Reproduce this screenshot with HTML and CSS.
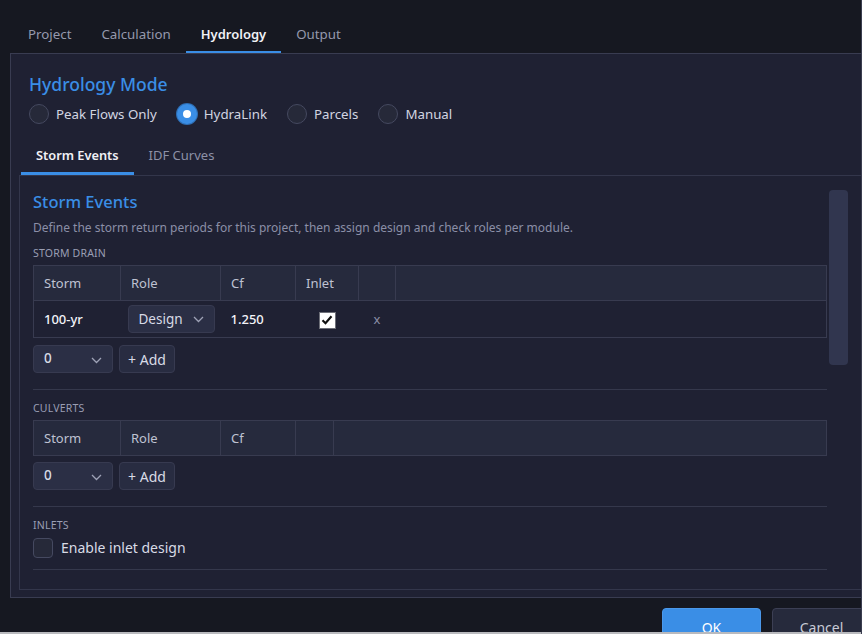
FILE: index.html
```html
<!DOCTYPE html>
<html lang="en">

<head>
    <meta charset="UTF-8">
    <meta name="viewport" content="width=device-width, initial-scale=1.0">
    <title>Project Settings</title>
    <link rel="stylesheet" href="styles.css">
</head>

<body>
    <div class="window">
        <div class="tabs">
            <span class="tab">Project</span>
            <span class="tab">Calculation</span>
            <span class="tab active">Hydrology</span>
            <span class="tab">Output</span>
        </div>

        <div class="panel">
            <h1 class="mode-title">Hydrology Mode</h1>
            <div class="radios">
                <label class="radio"><span class="dot"></span>Peak Flows Only</label>
                <label class="radio checked"><span class="dot"></span>HydraLink</label>
                <label class="radio"><span class="dot"></span>Parcels</label>
                <label class="radio"><span class="dot"></span>Manual</label>
            </div>

            <div class="subtabs">
                <span class="subtab active">Storm Events</span>
                <span class="subtab">IDF Curves</span>
            </div>

            <div class="inner">
                <div class="content">
                    <h2 class="section-title">Storm Events</h2>
                    <p class="desc">Define the storm return periods for this project, then assign design and check roles per module.</p>

                    <div class="group-label">Storm Drain</div>
                    <table class="grid">
                        <tr>
                            <th class="c-storm">Storm</th>
                            <th class="c-role">Role</th>
                            <th class="c-cf">Cf</th>
                            <th class="c-inlet">Inlet</th>
                            <th class="c-del"></th>
                            <th></th>
                        </tr>
                        <tr>
                            <td class="strong">100-yr</td>
                            <td>
                                <span class="select role-select">Design
                                    <svg class="chev" width="11" height="7" viewBox="0 0 11 7"><path d="M1 1l4.5 4.5L10 1" fill="none" stroke="currentColor" stroke-width="1.3"/></svg>
                                </span>
                            </td>
                            <td class="strong">1.250</td>
                            <td class="center">
                                <span class="check on">
                                    <svg width="14" height="14" viewBox="0 0 14 14"><path d="M2.5 7.2l3 3 6-7" fill="none" stroke="#111" stroke-width="2.2"/></svg>
                                </span>
                            </td>
                            <td class="center del">x</td>
                            <td></td>
                        </tr>
                    </table>
                    <div class="adder">
                        <span class="select num-select">0
                            <svg class="chev" width="11" height="7" viewBox="0 0 11 7"><path d="M1 1l4.5 4.5L10 1" fill="none" stroke="currentColor" stroke-width="1.3"/></svg>
                        </span>
                        <button class="btn">+ Add</button>
                    </div>
                    <div class="divider"></div>

                    <div class="group-label">Culverts</div>
                    <table class="grid">
                        <tr>
                            <th class="c-storm">Storm</th>
                            <th class="c-role">Role</th>
                            <th class="c-cf">Cf</th>
                            <th class="c-del2"></th>
                            <th></th>
                        </tr>
                    </table>
                    <div class="adder tight">
                        <span class="select num-select">0
                            <svg class="chev" width="11" height="7" viewBox="0 0 11 7"><path d="M1 1l4.5 4.5L10 1" fill="none" stroke="currentColor" stroke-width="1.3"/></svg>
                        </span>
                        <button class="btn">+ Add</button>
                    </div>
                    <div class="divider"></div>

                    <div class="group-label">Inlets</div>
                    <label class="inlet-toggle"><span class="check off"></span>Enable inlet design</label>
                    <div class="divider last"></div>
                </div>
                <div class="track">
                    <div class="thumb"></div>
                </div>
            </div>
        </div>

        <div class="footer">
            <button class="dlg-btn primary">OK</button>
            <button class="dlg-btn">Cancel</button>
        </div>
        <div class="edge"></div>
    </div>
</body>

</html>
```

FILE: styles.css
```css
* {
    margin: 0;
    padding: 0;
    box-sizing: border-box;
}

html,
body {
    height: 634px;
    overflow: hidden;
    background: #161821;
}

body {
    font-family: 'Noto Sans', 'Open Sans', sans-serif;
    color: #d3d6e2;
    font-size: 14px;
    border-right: 1px solid #3b3e50;
}

.window {
    width: 880px;
    height: 634px;
    display: flex;
    flex-direction: column;
    padding: 16px 0 0 10px;
}

.tabs {
    display: flex;
    margin-left: 3px;
}

.tab {
    padding: 8px 15px 7px;
    line-height: 20px;
    font-size: 13.3px;
    color: #9598ad;
    border-bottom: 2px solid transparent;
}

.tab.active {
    color: #f0f1f6;
    font-weight: 600;
    font-size: 13px;
    border-bottom-color: #3a8ee6;
}

.panel {
    background: #1f2133;
    border: 1px solid #393c51;
    padding: 18px 0 7px 8px;
}

.mode-title {
    margin-left: 10px;
    font-size: 17.5px;
    font-weight: 500;
    line-height: 24px;
    color: #3a8ee6;
}

.radios {
    display: flex;
    gap: 20px;
    margin: 8px 0 0 10px;
}

.radio {
    display: flex;
    align-items: center;
    gap: 7px;
    font-size: 13.3px;
    line-height: 20px;
    color: #d2d5e1;
}

.dot {
    width: 20px;
    height: 20px;
    border-radius: 50%;
    border: 1px solid #454960;
    background: #262939;
}

.radio.checked .dot {
    background: #ffffff;
    border: 6px solid #3a8ee6;
    box-shadow: 0 0 0 1px #2f6fb5;
}

.subtabs {
    display: flex;
    margin: 13px 0 0 2px;
}

.subtab {
    padding: 8px 15px 7px;
    line-height: 20px;
    font-size: 13px;
    color: #8d91a7;
    border-bottom: 3px solid transparent;
}

.subtab.active {
    color: #f0f1f6;
    font-weight: 600;
    font-size: 12.8px;
    border-bottom-color: #3a8ee6;
}

.inner {
    display: flex;
    border: 1px solid #33364b;
    padding: 15px 0 19px 13px;
}

.content {
    width: 794px;
    flex-shrink: 0;
}

.track {
    margin-left: 2px;
}

.thumb {
    width: 19px;
    height: 175px;
    margin-top: -1px;
    border-radius: 4px;
    background: #31364f;
}

.section-title {
    font-size: 16.5px;
    font-weight: 500;
    line-height: 22px;
    color: #3a8ee6;
}

.desc {
    margin-top: 6px;
    font-size: 12px;
    line-height: 18px;
    color: #8b8fa7;
}

.group-label {
    margin-top: 8px;
    font-size: 10.5px;
    line-height: 16px;
    text-transform: uppercase;
    letter-spacing: 0.2px;
    color: #9a9eb3;
}

.grid {
    width: 794px;
    margin-top: 4px;
    table-layout: fixed;
    border-collapse: collapse;
    border: 1px solid #383b50;
}

.grid th {
    height: 35px;
    padding: 0 10px;
    text-align: left;
    font-weight: 400;
    font-size: 13px;
    color: #bfc2d2;
    background: #262a3d;
    border-right: 1px solid #383b50;
}

.grid td {
    height: 37px;
    padding: 0 10px;
    font-size: 13px;
    border-top: 1px solid #383b50;
}

.grid .c-storm { width: 87px; }
.grid .c-role { width: 100px; }
.grid .c-cf { width: 75px; }
.grid .c-inlet { width: 63px; }
.grid .c-del { width: 37px; }
.grid .c-del2 { width: 38px; }

.strong {
    color: #f2f3f8;
    font-weight: 500;
}

.center {
    text-align: center;
}

.del {
    font-size: 11px;
    color: #8b8fa7;
}

.select {
    display: inline-flex;
    align-items: center;
    justify-content: space-between;
    height: 28px;
    padding: 0 10px;
    border-radius: 4px;
    border: 1px solid #373a50;
    background: #2b2f45;
    color: #d8dbe6;
    font-size: 13.5px;
}

.chev {
    color: #9ea2b6;
}

.role-select {
    width: 87px;
    margin-left: -3px;
}

.num-select {
    width: 80px;
    align-items: flex-start;
    padding-top: 3px;
    font-weight: 500;
}

.num-select .chev {
    margin-top: 8px;
}

.check {
    display: inline-flex;
    align-items: center;
    justify-content: center;
    vertical-align: middle;
    width: 17px;
    height: 17px;
}

.check.on {
    background: #ffffff;
    border: 1px solid #6d6f78;
}

.check.off {
    width: 20px;
    height: 20px;
    border-radius: 4px;
    border: 1px solid #454960;
    background: #262939;
}

.adder {
    display: flex;
    gap: 6px;
    margin-top: 7px;
}

.adder.tight {
    margin-top: 6px;
}

.btn {
    height: 28px;
    width: 56px;
    border-radius: 4px;
    border: 1px solid #373a50;
    background: #282c41;
    color: #d8dbe6;
    font-family: inherit;
    font-size: 14px;
}

.divider {
    height: 1px;
    margin-top: 16px;
    background: #35384c;
}

.divider + .group-label {
    margin-top: 10px;
}

.inlet-toggle {
    display: flex;
    align-items: center;
    gap: 8px;
    margin-top: 5px;
    font-size: 14px;
    line-height: 20px;
    color: #d8dbe6;
}

.divider.last {
    margin-top: 11px;
}

.footer {
    flex: 1;
    overflow: hidden;
    display: flex;
    justify-content: flex-end;
    gap: 11px;
    padding: 10px 9px 0 0;
}

.dlg-btn {
    flex-shrink: 0;
    width: 99px;
    height: 36px;
    border-radius: 4px;
    border: 1px solid #3c3f54;
    background: #262a3c;
    color: #c8cad6;
    font-family: inherit;
    font-size: 14px;
    padding-top: 3px;
}

.dlg-btn.primary {
    background: #3a8ee6;
    border-color: #4b98ea;
    color: #ffffff;
}

.edge {
    height: 2px;
    margin-left: -10px;
    background: #b9babe;
}
```
